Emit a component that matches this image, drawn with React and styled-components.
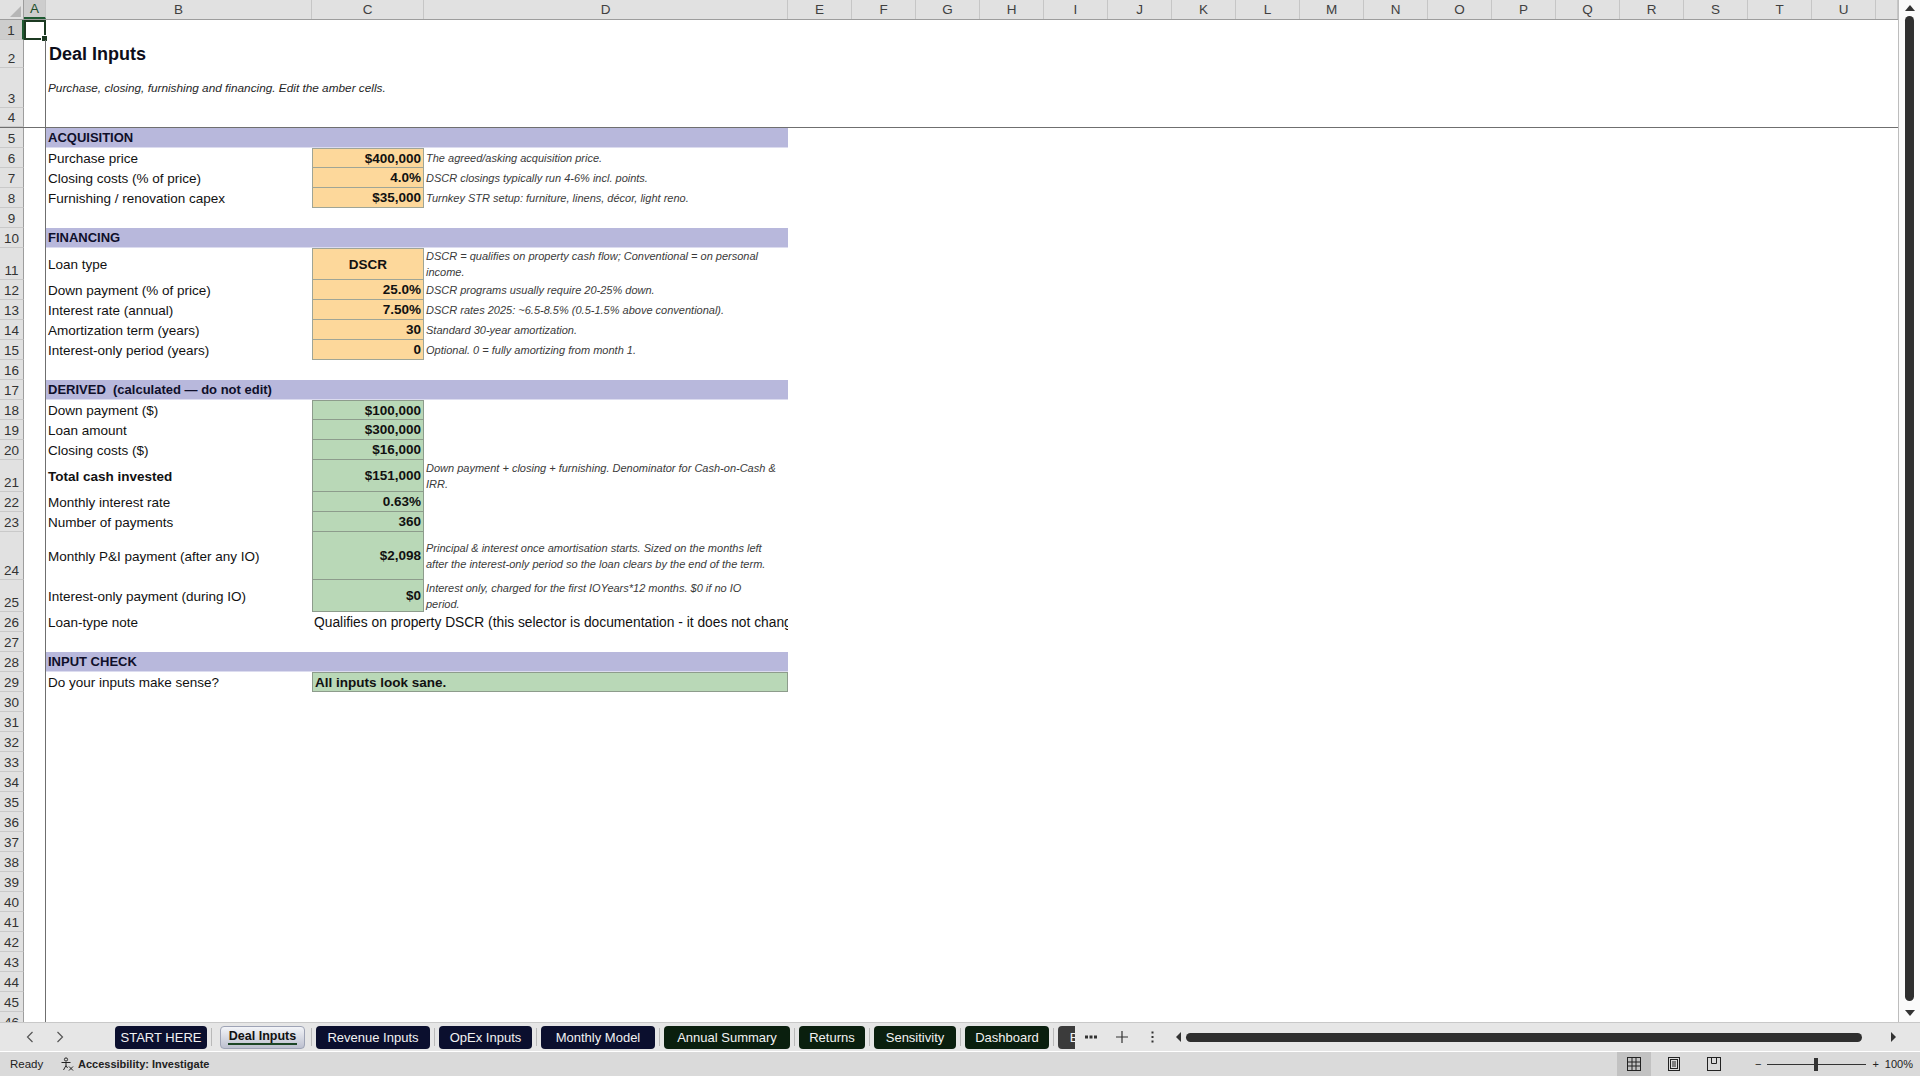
import React from "react";
import styled, { createGlobalStyle, css } from "styled-components";

const GlobalStyle = createGlobalStyle`
  * { box-sizing: border-box; }
  html, body { margin: 0; padding: 0; overflow: hidden; background: #fff; }
  body { font-family: "Liberation Sans", Arial, sans-serif; }
`;

const COLS = "24px 22px 266px 112px 364px repeat(17, 64px) 1fr";
const LETTERS = "ABCDEFGHIJKLMNOPQRSTU".split("");

const Window = styled.div`
  width: 1920px;
  height: 1076px;
  display: flex;
  flex-direction: column;
  background: #fff;
`;

const Main = styled.div`
  flex: 1;
  display: flex;
  min-height: 0;
`;

const Sheet = styled.div`
  flex: 1;
  display: flex;
  flex-direction: column;
  overflow: hidden;
`;

const Row = styled.div`
  display: grid;
  grid-template-columns: ${COLS};
  height: ${(p) => p.$h || 20}px;
  flex: none;
  ${(p) => p.$freeze && css`border-bottom: 1px solid #6f6f6f;`}
`;

const HeadRow = styled(Row)`
  background: #e1e1e1;
  border-bottom: 1px solid #9d9d9d;
`;

const Corner = styled.div`
  position: relative;
  border-right: 1px solid #9d9d9d;
  &::after {
    content: "";
    position: absolute;
    right: 2px;
    bottom: 2px;
    border-style: solid;
    border-width: 0 0 11px 11px;
    border-color: transparent transparent #b6b6b6 transparent;
  }
`;

const ColHead = styled.div`
  display: flex;
  align-items: center;
  justify-content: center;
  font-size: 13.5px;
  color: #404040;
  border-right: 1px solid #c6c6c6;
  ${(p) => p.$sel && css`
    background: #cdcdcd;
    color: #1e4d2b;
    border-bottom: 2px solid #1e5a32;
  `}
`;

const RowHead = styled.div`
  display: flex;
  align-items: flex-end;
  justify-content: center;
  padding-bottom: 1px;
  font-size: 13.5px;
  color: #333;
  background: ${(p) => (p.$sel ? "#cdcdcd" : "#e1e1e1")};
  border-right: 1px solid #9d9d9d;
  border-bottom: 1px solid #c9c9c9;
  ${(p) => p.$sel && css`border-right: 2px solid #1e5a32;`}
`;

const ColA = styled.div`
  position: relative;
  border-right: 1px solid #6f6f6f;
`;

const Selection = styled.div`
  position: absolute;
  inset: 0 -1px 0 0;
  border: 2px solid #1c3a22;
  &::after {
    content: "";
    position: absolute;
    right: -4px;
    bottom: -4px;
    width: 5px;
    height: 5px;
    background: #1c3a22;
    border: 1px solid #fff;
  }
`;

const Title = styled.div`
  grid-column: 3 / span 3;
  display: flex;
  align-items: center;
  padding-left: 3px;
  font-size: 18px;
  font-weight: bold;
  color: #0d0d1a;
`;

const Subtitle = styled.div`
  grid-column: 3 / span 3;
  display: flex;
  align-items: center;
  padding-left: 2px;
  font-size: 11.8px;
  font-style: italic;
  color: #262626;
`;

const Section = styled.div`
  grid-column: 3 / span 3;
  display: flex;
  align-items: center;
  padding-left: 2px;
  background: #b8b8dc;
  border-bottom: 1px solid #dcdcef;
  font-size: 13px;
  font-weight: bold;
  color: #0f0f2a;
  white-space: pre;
`;

const Label = styled.div`
  grid-column: 3;
  display: flex;
  align-items: center;
  padding-left: 2px;
  font-size: 13.5px;
  color: #111;
  font-weight: ${(p) => (p.$bold ? "bold" : "normal")};
  white-space: nowrap;
`;

const TONES = {
  amber: { bg: "#fdd89b", line: "#9fa596" },
  green: { bg: "#b9d8b7", line: "#8d9c8c" },
};

const Value = styled.div`
  grid-column: 4;
  display: flex;
  align-items: center;
  justify-content: ${(p) => (p.$center ? "center" : "flex-end")};
  padding: 0 2px;
  font-size: 13.5px;
  font-weight: bold;
  color: #111;
  background: ${(p) => TONES[p.$tone].bg};
  border: 1px solid ${(p) => TONES[p.$tone].line};
  border-top-width: ${(p) => (p.$top ? 1 : 0)}px;
`;

const Note = styled.div`
  grid-column: 5;
  display: flex;
  flex-direction: column;
  justify-content: center;
  padding-left: 2px;
  font-size: 11px;
  font-style: italic;
  line-height: 16px;
  color: #3a3a3a;
  white-space: nowrap;
`;

const Wide = styled.div`
  grid-column: 4 / span 2;
  display: flex;
  align-items: center;
  padding-left: 2px;
  font-size: 13.8px;
  color: #111;
  white-space: nowrap;
  overflow: hidden;
  ${(p) => p.$tone && css`
    background: ${TONES[p.$tone].bg};
    border: 1px solid ${TONES[p.$tone].line};
    font-weight: bold;
    font-size: 13.5px;
  `}
`;

/* vertical scroll bar */
const VScroll = styled.div`
  width: 22px;
  flex: none;
  display: flex;
  flex-direction: column;
  align-items: center;
  background: #fafafa;
  border-left: 1px solid #bdbdbd;
  padding: 5px 0 6px;
`;

const Arrow = styled.div`
  width: 0;
  height: 0;
  border-left: 5px solid transparent;
  border-right: 5px solid transparent;
  ${(p) =>
    p.$dir === "up"
      ? css`border-bottom: 6px solid #333;`
      : css`border-top: 6px solid #333;`}
`;

const VThumb = styled.div`
  flex: 1;
  width: 9px;
  margin: 5px 0 9px;
  background: #2e2e2e;
  border-radius: 5px;
`;

/* sheet tabs */
const TabBar = styled.div`
  height: 29px;
  flex: none;
  display: flex;
  align-items: center;
  background: #e6e6e6;
  border-top: 1px solid #c8c8c8;
`;

const Nav = styled.div`
  width: 115px;
  flex: none;
  display: flex;
  align-items: center;
  gap: 22px;
  padding-left: 26px;
`;

const Strip = styled.div`
  width: 960px;
  flex: none;
  display: flex;
  align-items: center;
  overflow: hidden;
`;

const TAB_COLORS = {
  navy: "#0b0f2e",
  green: "#0a1f0e",
  gray: "#3b3b3b",
};

const Tab = styled.div`
  position: relative;
  flex: none;
  width: ${(p) => p.$w}px;
  height: 23px;
  display: flex;
  align-items: center;
  justify-content: center;
  border-radius: 4px;
  font-size: 13px;
  white-space: nowrap;
  overflow: hidden;
  ${(p) =>
    p.$active
      ? css`
          margin: 0 2px 0 4px;
          background: linear-gradient(#f3f4f8, #bcc0cf);
          border: 1px solid #9ea3b5;
          color: #111;
          font-weight: bold;
          font-size: 12.5px;
          align-items: flex-start;
          padding-top: 2px;
          &::after {
            content: "";
            position: absolute;
            left: 7px;
            right: 7px;
            bottom: 3px;
            height: 2px;
            background: #1c4626;
          }
        `
      : css`
          background: ${TAB_COLORS[p.$kind]};
          color: #f2f2f2;
        `}
`;

const Sep = styled.div`
  flex: none;
  width: 1px;
  height: 18px;
  margin: 0 4px;
  background: #b9b9b9;
`;

const Tool = styled.div`
  flex: none;
  width: 31px;
  height: 20px;
  display: flex;
  align-items: center;
  justify-content: center;
`;

const HScroll = styled.div`
  flex: 1;
  display: flex;
  align-items: center;
  gap: 5px;
  padding: 0 24px 0 8px;
`;

const HArrow = styled.div`
  width: 0;
  height: 0;
  border-top: 5px solid transparent;
  border-bottom: 5px solid transparent;
  ${(p) =>
    p.$dir === "left"
      ? css`border-right: 5px solid #333;`
      : css`border-left: 5px solid #333;`}
`;

const HThumb = styled.div`
  height: 9px;
  width: 676px;
  background: #2e2e2e;
  border-radius: 5px;
  margin-right: auto;
`;

/* status bar */
const Status = styled.div`
  height: 25px;
  flex: none;
  display: flex;
  align-items: center;
  background: #dadada;
  border-top: 1px solid #fff;
  font-size: 11.5px;
  color: #222;
`;

const Ready = styled.span`
  padding-left: 10px;
  width: 60px;
`;

const Access = styled.span`
  display: flex;
  align-items: center;
  gap: 4px;
  font-weight: bold;
  font-size: 11px;
`;

const Spacer = styled.div`
  flex: 1;
`;

const ViewBtn = styled.div`
  width: 34px;
  height: 24px;
  display: flex;
  align-items: center;
  justify-content: center;
  margin-right: 6px;
  background: ${(p) => (p.$on ? "#c2c2c2" : "transparent")};
`;

const Zoom = styled.div`
  display: flex;
  align-items: center;
  gap: 6px;
  margin-left: 18px;
  padding-right: 7px;
  font-size: 11px;
  color: #222;
`;

const Slider = styled.div`
  position: relative;
  width: 99px;
  height: 1px;
  background: #333;
  &::after {
    content: "";
    position: absolute;
    left: 47px;
    top: -6px;
    width: 4px;
    height: 13px;
    background: #333;
  }
`;

const Chevron = ({ dir }) => (
  <svg width="8" height="12" viewBox="0 0 8 12" fill="none" stroke="#555" strokeWidth="1.2">
    <path d={dir === "left" ? "M6.5 1 L1.5 6 L6.5 11" : "M1.5 1 L6.5 6 L1.5 11"} />
  </svg>
);

const MoreIcon = () => (
  <svg width="12" height="4" viewBox="0 0 12 4" fill="#333">
    <rect x="0" y="0.5" width="3" height="3" />
    <rect x="4.5" y="0.5" width="3" height="3" />
    <rect x="9" y="0.5" width="3" height="3" />
  </svg>
);

const PlusIcon = () => (
  <svg width="12" height="12" viewBox="0 0 12 12" stroke="#333" strokeWidth="1.2">
    <path d="M6 0 V12 M0 6 H12" />
  </svg>
);

const KebabIcon = () => (
  <svg width="3" height="12" viewBox="0 0 3 12" fill="#333">
    <rect x="0.5" y="0.5" width="2" height="2" />
    <rect x="0.5" y="5" width="2" height="2" />
    <rect x="0.5" y="9.5" width="2" height="2" />
  </svg>
);

const AccessIcon = () => (
  <svg width="14" height="14" viewBox="0 0 14 14" fill="none" stroke="#222" strokeWidth="1">
    <circle cx="6" cy="2.5" r="1.6" />
    <path d="M1.5 5.5 L10.5 5.5 M6 5.5 L6 8.5 M6 8.5 L3.5 13 M6 8.5 L7.5 11" />
    <path d="M9 9.5 L13 13.5 M13 9.5 L9 13.5" />
  </svg>
);

const NormalIcon = () => (
  <svg width="14" height="14" viewBox="0 0 14 14" fill="none" stroke="#222" strokeWidth="1">
    <rect x="0.5" y="0.5" width="13" height="13" />
    <path d="M0.5 5 H13.5 M0.5 9 H13.5 M5 0.5 V13.5 M9 0.5 V13.5" />
  </svg>
);

const LayoutIcon = () => (
  <svg width="12" height="14" viewBox="0 0 12 14" fill="none" stroke="#222" strokeWidth="1">
    <rect x="0.5" y="0.5" width="11" height="13" />
    <rect x="2.5" y="2.5" width="7" height="9" />
    <path d="M4 5 H8 M4 7 H8 M4 9 H8" />
  </svg>
);

const BreakIcon = () => (
  <svg width="14" height="14" viewBox="0 0 14 14" fill="none" stroke="#222" strokeWidth="1">
    <rect x="0.5" y="0.5" width="13" height="13" />
    <path d="M4.5 0.5 V6.5 H9.5 V0.5" />
  </svg>
);

const TABS = [
  { name: "START HERE", kind: "navy", w: 92 },
  { name: "Deal Inputs", active: true, w: 85 },
  { name: "Revenue Inputs", kind: "navy", w: 114 },
  { name: "OpEx Inputs", kind: "navy", w: 93 },
  { name: "Monthly Model", kind: "navy", w: 114 },
  { name: "Annual Summary", kind: "green", w: 126 },
  { name: "Returns", kind: "green", w: 66 },
  { name: "Sensitivity", kind: "green", w: 82 },
  { name: "Dashboard", kind: "green", w: 84 },
  { name: "Break-even", kind: "gray", w: 90 },
];

// row model: n, h, and cell content
const ROWS = [
  { n: 1, sel: true },
  { n: 2, h: 28, title: "Deal Inputs" },
  { n: 3, h: 40, subtitle: "Purchase, closing, furnishing and financing. Edit the amber cells." },
  { n: 4, freeze: true },
  { n: 5, section: "ACQUISITION" },
  { n: 6, label: "Purchase price", value: "$400,000", tone: "amber", top: true, note: ["The agreed/asking acquisition price."] },
  { n: 7, label: "Closing costs (% of price)", value: "4.0%", tone: "amber", note: ["DSCR closings typically run 4-6% incl. points."] },
  { n: 8, label: "Furnishing / renovation capex", value: "$35,000", tone: "amber", note: ["Turnkey STR setup: furniture, linens, décor, light reno."] },
  { n: 9 },
  { n: 10, section: "FINANCING" },
  { n: 11, h: 32, label: "Loan type", value: "DSCR", center: true, tone: "amber", top: true, note: ["DSCR = qualifies on property cash flow; Conventional = on personal", "income."] },
  { n: 12, label: "Down payment (% of price)", value: "25.0%", tone: "amber", note: ["DSCR programs usually require 20-25% down."] },
  { n: 13, label: "Interest rate (annual)", value: "7.50%", tone: "amber", note: ["DSCR rates 2025: ~6.5-8.5% (0.5-1.5% above conventional)."] },
  { n: 14, label: "Amortization term (years)", value: "30", tone: "amber", note: ["Standard 30-year amortization."] },
  { n: 15, label: "Interest-only period (years)", value: "0", tone: "amber", note: ["Optional. 0 = fully amortizing from month 1."] },
  { n: 16 },
  { n: 17, section: "DERIVED  (calculated — do not edit)" },
  { n: 18, label: "Down payment ($)", value: "$100,000", tone: "green", top: true },
  { n: 19, label: "Loan amount", value: "$300,000", tone: "green" },
  { n: 20, label: "Closing costs ($)", value: "$16,000", tone: "green" },
  { n: 21, h: 32, label: "Total cash invested", bold: true, value: "$151,000", tone: "green", note: ["Down payment + closing + furnishing. Denominator for Cash-on-Cash &", "IRR."] },
  { n: 22, label: "Monthly interest rate", value: "0.63%", tone: "green" },
  { n: 23, label: "Number of payments", value: "360", tone: "green" },
  { n: 24, h: 48, label: "Monthly P&I payment (after any IO)", value: "$2,098", tone: "green", note: ["Principal & interest once amortisation starts. Sized on the months left", "after the interest-only period so the loan clears by the end of the term."] },
  { n: 25, h: 32, label: "Interest-only payment (during IO)", value: "$0", tone: "green", note: ["Interest only, charged for the first IOYears*12 months. $0 if no IO", "period."] },
  { n: 26, label: "Loan-type note", wide: "Qualifies on property DSCR (this selector is documentation - it does not change the maths)" },
  { n: 27 },
  { n: 28, section: "INPUT CHECK" },
  { n: 29, label: "Do your inputs make sense?", wide: "All inputs look sane.", wideTone: "green" },
];
for (let n = 30; n <= 46; n++) ROWS.push({ n });

const SheetRow = ({ r }) => (
  <Row $h={r.h} $freeze={r.freeze}>
    <RowHead $sel={r.sel}>{r.n}</RowHead>
    <ColA>{r.sel && <Selection />}</ColA>
    {r.title && <Title>{r.title}</Title>}
    {r.subtitle && <Subtitle>{r.subtitle}</Subtitle>}
    {r.section && <Section>{r.section}</Section>}
    {r.label && <Label $bold={r.bold}>{r.label}</Label>}
    {r.value && (
      <Value $tone={r.tone} $top={r.top} $center={r.center}>
        {r.value}
      </Value>
    )}
    {r.note && (
      <Note>
        {r.note.map((line) => (
          <span key={line}>{line}</span>
        ))}
      </Note>
    )}
    {r.wide && <Wide $tone={r.wideTone}>{r.wide}</Wide>}
  </Row>
);

export default function App() {
  return (
    <Window>
      <GlobalStyle />
      <Main>
        <Sheet>
          <HeadRow>
            <Corner />
            {LETTERS.map((l) => (
              <ColHead key={l} $sel={l === "A"}>
                {l}
              </ColHead>
            ))}
            <ColHead />
          </HeadRow>
          {ROWS.map((r) => (
            <SheetRow key={r.n} r={r} />
          ))}
        </Sheet>
        <VScroll>
          <Arrow $dir="up" />
          <VThumb />
          <Arrow $dir="down" />
        </VScroll>
      </Main>

      <TabBar>
        <Nav>
          <Chevron dir="left" />
          <Chevron dir="right" />
        </Nav>
        <Strip>
          {TABS.map((t, i) => (
            <React.Fragment key={t.name}>
              {i > 0 && <Sep />}
              <Tab $w={t.w} $kind={t.kind} $active={t.active}>
                {t.name}
              </Tab>
            </React.Fragment>
          ))}
        </Strip>
        <Tool>
          <MoreIcon />
        </Tool>
        <Tool>
          <PlusIcon />
        </Tool>
        <Tool>
          <KebabIcon />
        </Tool>
        <HScroll>
          <HArrow $dir="left" />
          <HThumb />
          <HArrow $dir="right" />
        </HScroll>
      </TabBar>

      <Status>
        <Ready>Ready</Ready>
        <Access>
          <AccessIcon />
          Accessibility: Investigate
        </Access>
        <Spacer />
        <ViewBtn $on>
          <NormalIcon />
        </ViewBtn>
        <ViewBtn>
          <LayoutIcon />
        </ViewBtn>
        <ViewBtn>
          <BreakIcon />
        </ViewBtn>
        <Zoom>
          <span>−</span>
          <Slider />
          <span>+</span>
          <span>100%</span>
        </Zoom>
      </Status>
    </Window>
  );
}
